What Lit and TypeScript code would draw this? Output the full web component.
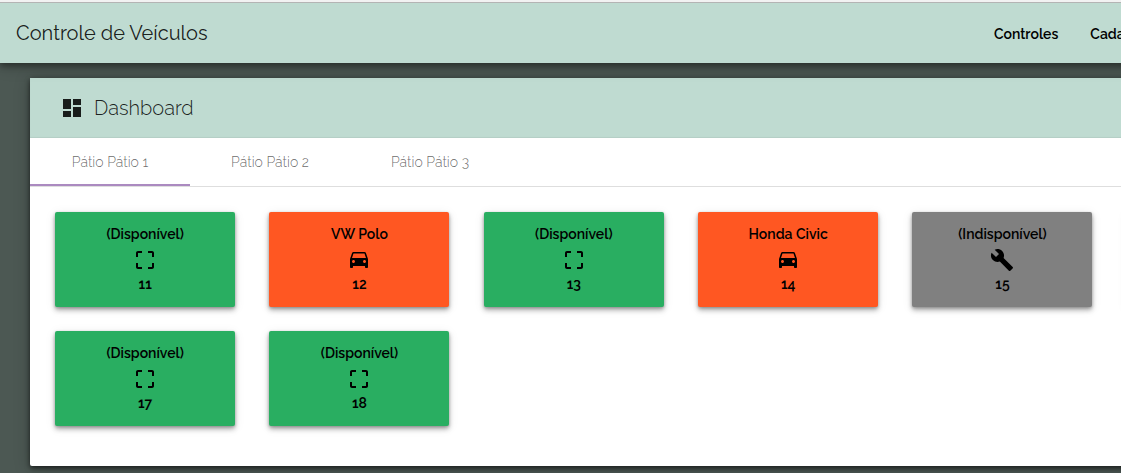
import { LitElement, html, css, svg } from "lit";
import { customElement, property, state } from "lit/decorators.js";
import { classMap } from "lit/directives/class-map.js";

type Status = "free" | "taken" | "blocked";
interface Spot {
  id: number;
  label: string;
  status: Status;
}

const ICONS: Record<string, string> = {
  dashboard: "M3 13h8V3H3v10zm0 8h8v-6H3v6zm10 0h8V11h-8v10zm0-18v6h8V3h-8z",
  free: "M3 5v4h2V5h4V3H5c-1.1 0-2 .9-2 2zm2 10H3v4c0 1.1.9 2 2 2h4v-2H5v-4zm14 4h-4v2h4c1.1 0 2-.9 2-2v-4h-2v4zm0-16h-4v2h4v4h2V5c0-1.1-.9-2-2-2z",
  taken:
    "M18.92 5.01C18.72 4.42 18.16 4 17.5 4h-11c-.66 0-1.21.42-1.42 1.01L3 11v8c0 .55.45 1 1 1h1c.55 0 1-.45 1-1v-1h12v1c0 .55.45 1 1 1h1c.55 0 1-.45 1-1v-8l-2.08-5.99zM6.5 15c-.83 0-1.5-.67-1.5-1.5S5.67 12 6.5 12s1.5.67 1.5 1.5S7.33 15 6.5 15zm11 0c-.83 0-1.5-.67-1.5-1.5s.67-1.5 1.5-1.5 1.5.67 1.5 1.5-.67 1.5-1.5 1.5zM5 10l1.5-4.5h11L19 10H5z",
  blocked:
    "M22.7 19l-9.1-9.1c.9-2.3.4-5-1.5-6.9-2-2-5-2.4-7.4-1.3L9 6 6 9 1.6 4.7C.4 7.1.9 10.1 2.9 12.1c1.9 1.9 4.6 2.4 6.9 1.5l9.1 9.1c.4.4 1 .4 1.4 0l2.3-2.3c.5-.4.5-1.1.1-1.4z",
};

const icon = (name: string) => html`
  <svg width="24" height="24" viewBox="0 0 24 24" fill="currentColor" aria-hidden="true">
    ${svg`<path d=${ICONS[name]}></path>`}
  </svg>
`;

@customElement("parking-spot")
export class ParkingSpot extends LitElement {
  @property({ attribute: false }) spot!: Spot;

  static styles = css`
    :host {
      display: block;
    }
    .spot {
      box-sizing: border-box;
      display: flex;
      flex-direction: column;
      align-items: center;
      width: 180px;
      margin: 0 auto;
      padding: 12px 8px 13px;
      border: 0;
      border-radius: 2px;
      color: #000;
      font: 600 14px/20px Raleway, Lato, sans-serif;
      box-shadow: 0 1px 3px rgba(0, 0, 0, 0.2), 0 3px 5px rgba(0, 0, 0, 0.3), 0 2px 12px rgba(0, 0, 0, 0.08);
      cursor: pointer;
    }
    .free {
      background: #29ae61;
    }
    .taken {
      background: #ff5722;
    }
    .blocked {
      background: #808080;
    }
    svg {
      display: block;
      margin: 4px 0 2px;
    }
  `;

  render() {
    const { id, label, status } = this.spot;
    return html`
      <button class=${classMap({ spot: true, [status]: true })}>
        <span>${label}</span>
        ${icon(status)}
        <span>${id}</span>
      </button>
    `;
  }
}

@customElement("app-root")
export class AppRoot extends LitElement {
  @state() private active = 0;

  private yards = ["Pátio Pátio 1", "Pátio Pátio 2", "Pátio Pátio 3"];

  private spots: Spot[] = [
    { id: 11, label: "(Disponível)", status: "free" },
    { id: 12, label: "VW Polo", status: "taken" },
    { id: 13, label: "(Disponível)", status: "free" },
    { id: 14, label: "Honda Civic", status: "taken" },
    { id: 15, label: "(Indisponível)", status: "blocked" },
    { id: 16, label: "(Disponível)", status: "free" },
    { id: 17, label: "(Disponível)", status: "free" },
    { id: 18, label: "(Disponível)", status: "free" },
  ];

  static styles = css`
    :host {
      display: block;
      overflow: hidden;
      min-height: 100vh;
      background: #4c5853;
      font-family: Raleway, Lato, sans-serif;
      color: rgba(0, 0, 0, 0.87);
    }
    .page {
      min-width: 1362px;
    }
    .toolbar {
      position: relative;
      display: flex;
      align-items: center;
      justify-content: space-between;
      min-height: 60px;
      padding: 0 205px 0 16px;
      border-top: 1px solid #b4b4b4;
      background: #bfdbd1;
      box-shadow: 0 -2px 0 #f2f2f2, 0 3px 6px rgba(0, 0, 0, 0.35), 0 4px 14px rgba(0, 0, 0, 0.2);
      margin-top: 2px;
      color: #000;
    }
    .frame {
      display: flow-root;
    }
    h1,
    h2 {
      margin: 0;
      font-size: 20px;
      line-height: 28px;
      font-weight: 300;
    }
    h1 {
      font-weight: 400;
      color: rgba(0, 0, 0, 0.87);
    }
    nav {
      display: flex;
      gap: 32px;
      padding-top: 2px;
    }
    nav a {
      color: inherit;
      font-size: 14px;
      line-height: 20px;
      font-weight: 600;
      text-decoration: none;
    }
    .panel {
      margin: 15px 30px 7px;
      padding-bottom: 40px;
      border-radius: 2px;
      background: #fff;
      box-shadow: 0 2px 5px rgba(0, 0, 0, 0.6), 0 2px 16px rgba(0, 0, 0, 0.25);
    }
    .panel-header {
      display: flex;
      align-items: center;
      gap: 10px;
      height: 60px;
      padding: 0 30px;
      background: #bfdbd1;
      box-shadow: inset 0 -1px 1px rgba(0, 0, 0, 0.06);
    }
    h2 {
      color: rgba(0, 0, 0, 0.87);
    }
    .tabs {
      display: flex;
      height: 48px;
      border-bottom: 1px solid #dedede;
    }
    .tab {
      width: 160px;
      padding: 2px 0 0;
      border: 0;
      border-bottom: 2px solid transparent;
      background: none;
      color: rgba(0, 0, 0, 0.6);
      font: 300 14px/20px Raleway, Lato, sans-serif;
      cursor: pointer;
    }
    .selected {
      border-bottom-color: #ab8ac0;
    }
    .spots {
      display: grid;
      grid-template-columns: repeat(6, 1fr);
      row-gap: 24px;
      padding: 25px 8px 0;
    }
  `;

  render() {
    return html`
      <div class="frame">
        <div class="page">
          <header class="toolbar">
            <h1>Controle de Veículos</h1>
            <nav>
              <a href="#controles">Controles</a>
              <a href="#cadastros">Cadastros</a>
            </nav>
          </header>
          <main class="panel">
            <div class="panel-header">${icon("dashboard")}<h2>Dashboard</h2></div>
            <div class="tabs" role="tablist">
              ${this.yards.map(
                (name, i) => html`
                  <button
                    class=${classMap({ tab: true, selected: i === this.active })}
                    role="tab"
                    aria-selected=${i === this.active ? "true" : "false"}
                    @click=${() => (this.active = i)}
                  >
                    ${name}
                  </button>
                `
              )}
            </div>
            <section class="spots">
              ${this.spots.map((s) => html`<parking-spot .spot=${s}></parking-spot>`)}
            </section>
          </main>
        </div>
      </div>
    `;
  }
}
